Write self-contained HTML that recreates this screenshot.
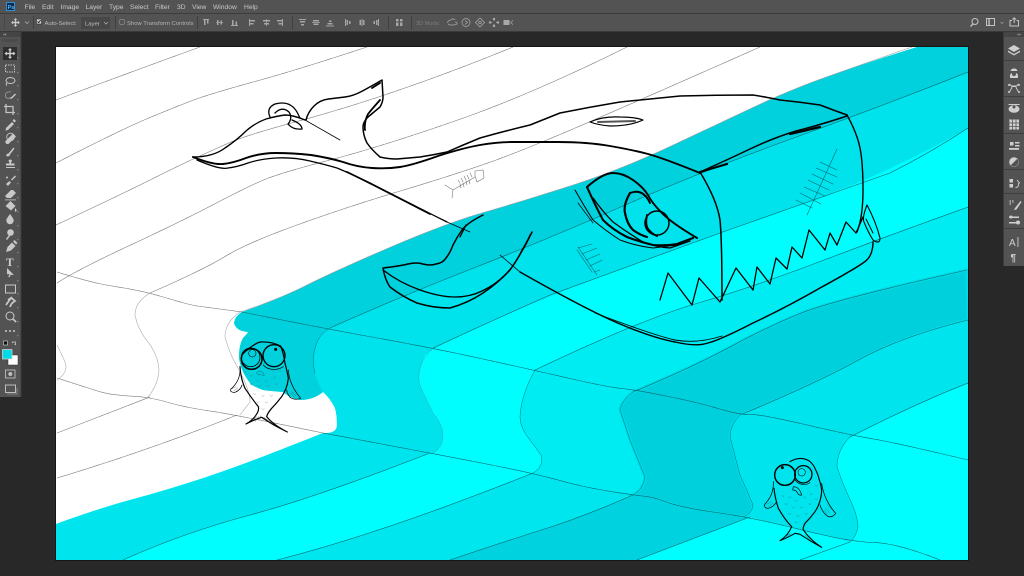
<!DOCTYPE html>
<html><head><meta charset="utf-8"><title>Photoshop</title>
<style>
html,body{margin:0;padding:0;width:1024px;height:576px;overflow:hidden;background:#282828}
svg.root{display:block;position:absolute;left:0;top:0;filter:blur(.3px)}
text{font-family:"Liberation Sans",sans-serif}
</style></head><body>
<svg class="root" width="1024" height="576" viewBox="0 0 1024 576" xmlns="http://www.w3.org/2000/svg">
<rect width="1024" height="576" fill="#282828"/>

<!-- top bars -->
<rect x="0" y="0" width="1024" height="13" fill="#535353"/>
<rect x="0" y="13" width="1024" height="1" fill="#3c3c3c"/>
<rect x="0" y="14" width="1024" height="17" fill="#535353"/>
<rect x="0" y="31" width="1024" height="1" fill="#3a3a3a"/>

<!-- PS logo -->
<rect x="6.5" y="2.5" width="8" height="8" fill="#0b2c4c" stroke="#2f8fd8" stroke-width="1"/>
<text x="7.6" y="9" font-size="5.5" font-weight="bold" fill="#5ab4f0">Ps</text>

<!-- menu -->
<g font-size="6.7" fill="#c9c9c9">
<text x="24.5" y="8.8">File</text><text x="42" y="8.8">Edit</text><text x="60.5" y="8.8">Image</text>
<text x="85.5" y="8.8">Layer</text><text x="109" y="8.8">Type</text><text x="130" y="8.8">Select</text>
<text x="155" y="8.8">Filter</text><text x="177" y="8.8">3D</text><text x="192" y="8.8">View</text>
<text x="213" y="8.8">Window</text><text x="244" y="8.8">Help</text>
</g>

<!-- options bar -->
<g stroke="#404040" stroke-width="1">
<path d="M33.5 16V29M115.5 16V29M197.5 16V29M292.5 16V29M388.5 16V29M411.5 16V29"/>
<path d="M4.5 16V29" stroke="#484848"/>
</g>
<g fill="#c8c8c8">
<path d="M15.5 18l1.8 2h-1.2v1.8h1.8v-1.2l2 1.9-2 1.9v-1.2h-1.8v1.8h1.2l-1.8 2-1.8-2h1.2v-1.8h-1.8v1.2l-2-1.9 2-1.9v1.2h1.8v-1.8h-1.2z"/>
</g>
<path d="M25 21.5l2 2 2-2" fill="none" stroke="#aaa" stroke-width=".8"/>
<rect x="36.500" y="19" width="5" height="5" fill="#d4d4d4" stroke="#333" stroke-width=".6"/>
<path d="M37.600 21.500l1 1.200 2-2.500" fill="none" stroke="#222" stroke-width=".9"/>
<text x="44.500" y="25" font-size="5.900" fill="#bdbdbd">Auto-Select:</text>
<rect x="81" y="17" width="29" height="12" fill="#474747"/>
<text x="85" y="25.500" font-size="5.900" fill="#c4c4c4">Layer</text>
<path d="M104 22l2 2 2-2" fill="none" stroke="#aaa" stroke-width=".8"/>
<rect x="119.500" y="19.500" width="5" height="5" rx="1.500" fill="none" stroke="#8a8a8a" stroke-width=".7"/>
<text x="127" y="25" font-size="5.900" fill="#b4b4b4">Show Transform Controls</text>
<g fill="#a6a6a6">
<path d="M203 19h6v1h-6zM204 20h1.500v5H204zM207 20h1.500v3.500H207z"/>
<path d="M216 22h7v.8h-7zM217 20h1.500v5H217zM220.500 20.500h1.500v4h-1.500z"/>
<path d="M231 25h7v1h-7zM232 20h1.500v5H232zM235.500 21.500h1.500v3.500h-1.500z"/>
<path d="M249 19h1v7h-1zM250 20h5v1.500h-5zM250 23h3.500v1.500H250z"/>
<path d="M266 19h.8v7H266zM263 20h7v1.500h-7zM264 23h5v1.500h-5z"/>
<path d="M282 19h1v7h-1zM277 20h5v1.500h-5zM278.500 23H282v1.500h-3.500z"/>
<path d="M299 19h7v1h-7zM300 21h5v1.500h-5zM301 24h3v1.500h-3z"/>
<path d="M312 22h8v.8h-8zM313 20h6v1.500h-6zM313.500 23.500h5V25h-5z"/>
<path d="M326 25.500h8v1h-8zM327.500 23h5v1.500h-5zM329 20.500h2.500V22H329z"/>
<path d="M345 19h1v7h-1zM346.500 20h1.500v5h-1.500zM349 21h1.500v3H349z"/>
<path d="M361.500 19h1v7h-1zM359.500 20h1.500v5h-1.500zM363 20h1.500v5H363z"/>
<path d="M378 19h1v7h-1zM376 20h1.500v5H376zM373.500 21h1.500v3h-1.500z"/>
<path d="M396 19h2.500v2.500H396zM400 19h2.500v2.500H400zM396 22.500h2.500V26H396zM400 22.500h2.500V26H400z"/>
</g>
<text x="416" y="25" font-size="5.600" fill="#7c7c7c">3D Mode:</text>
<g fill="none" stroke="#9a9a9a" stroke-width=".9">
<path d="M447.500 23c0-2 2-3 3.500-3 1-1.500 3-1.500 4 0M448 24c2 1.500 6 1.500 9 0 .5-1-.5-2-2-2"/>
<circle cx="466" cy="22.500" r="4"/><path d="M465 20.500l2.500 2-2.500 2"/>
<path d="M480 18l4.500 4.500L480 27l-4.500-4.500z"/><circle cx="480" cy="22.500" r="1.200"/>
<path d="M494 19v2M494 24v2M490 22.500h2M496 22.500h2"/>
</g>
<g fill="#a8a8a8">
<circle cx="494" cy="19" r="1.200"/><circle cx="494" cy="26" r="1.200"/><circle cx="490" cy="22.500" r="1.200"/><circle cx="498" cy="22.500" r="1.200"/>
<rect x="503.500" y="20" width="6" height="5"/>
<path d="M510 22.500l3-2.500v1l-2 1.500 2 1.500v1z"/>
</g>
<!-- right top icons -->
<g fill="none" stroke="#c4c4c4" stroke-width="1">
<circle cx="975" cy="21.500" r="3"/><path d="M973 24l-2.500 2.500" stroke-width="1.300"/>
<rect x="986.500" y="18.500" width="8" height="7"/><path d="M989 18.500v7" stroke-width="1.400"/>
<path d="M1000.500 22l1.500 1.500 1.500-1.500" stroke="#888"/>
<path d="M1012 20.500h-2v5.500h8.500v-5.500h-2M1014.200 23v-5M1012.500 19.500l1.700-1.700 1.700 1.700"/>
</g>

<!-- Left tool panel -->
<rect x="0" y="32" width="20.500" height="365" fill="#535353"/>
<rect x="20.500" y="32" width="1" height="365" fill="#3c3c3c"/>
<rect x="0" y="32" width="20.500" height="5" fill="#454545"/>
<path d="M3 34.500l1.500-1v2zM6.500 34.500l-1.500-1v2z" fill="#aaa"/>
<rect x="2" y="39" width="16" height="3" fill="#4b4b4b"/>
<rect x="3" y="47" width="14" height="13" fill="#2e2e2e"/>
<g fill="#d0d0d0">
<path d="M10 48l2 2.300h-1.300v2.500h2.500v-1.300l2.300 2-2.300 2v-1.300h-2.500v2.500H12l-2 2.300-2-2.300h1.300v-2.500H6.800v1.300l-2.300-2 2.300-2v1.300h2.500v-2.500H8z"/>
</g>
<g fill="none" stroke="#c4c4c4" stroke-width="1">
<rect x="5.500" y="65" width="9" height="7" stroke-dasharray="1.500 1"/>
<ellipse cx="10.500" cy="80.500" rx="4.500" ry="3"/><path d="M7 83c-1 1-1 2 0 2.500"/>
<path d="M11 92c-3-1-6 1-5.500 4s4 3 5 1" stroke="#8f8f8f"/>
<path d="M6 104v8.500h9M4 106.500h9V115" stroke-width="1.300"/>
</g>
<g fill="#c8c8c8">
<path d="M11 97.500l4-4 1 1-4 4-2 .8z"/>
<path d="M6 128l6-6 2 2-6 6-2.500.6zM12.500 120.500l1.500-1.500 2 2-1.500 1.500z"/>
<path d="M6 140.500l7-7 3 3-7 7a2 2 0 0 1-3-3z"/><circle cx="10.500" cy="137" r="3.800" fill="none" stroke="#c8c8c8" stroke-width=".8"/>
<path d="M6 156c.5-2 1.500-2.500 2.500-2.500l5-6 1 1-4.500 6c0 1.500-1.500 2.500-4 1.500z"/>
<path d="M8.500 160.500a2 2 0 0 1 3.500 0c0 1-1 1.500-1 3h3.500v2H6v-2h3.500c0-1.500-1-2-1-3zM6 167h9v1H6z"/>
<path d="M6 184l3.500-3 1.500 1.500-3 3.500zM11 179.500l4-4 1 1-4 4z"/><circle cx="7" cy="177.500" r="1"/>
<path d="M5 196l6-6h2l3 3-5 5H7z"/><path d="M5 199.500h11v.8H5z"/>
<path d="M5.500 206l5-5 5 5-4.500 4.500zM15.500 208c1 1.500 1.500 2.500.5 3.500s-1.700-1-.5-3.500z"/>
<path d="M10 214c2.500 3.500 3.700 5 3.700 6.500a3.700 3.700 0 0 1-7.400 0c0-1.500 1.200-3 3.700-6.500z"/>
<circle cx="10.500" cy="232.500" r="3.300"/><path d="M9 235l-3 4 1 1 3-4z"/>
<path d="M6 252l1.500-5 4.500-4.500 3.500 3.500-4.500 4.500zM13 241.500l1.500-1.500 3 3-1.500 1.500z"/>
<path d="M7 273l7 7-3.200-.2-1.500 2.700-1-1 1.300-2.500-2.600.2z" transform="translate(0,-5)"/>
</g>
<text x="6" y="266" font-size="11.500" font-weight="bold" fill="#d0d0d0" style="font-family:'Liberation Serif',serif">T</text>
<g fill="none" stroke="#c8c8c8" stroke-width="1">
<rect x="5.500" y="285" width="10" height="8"/>
<path d="M6 305c2-3 4-6 6-8M8 300l3-2c2 1 3 2 4 3-2 1-4 3-5 6" stroke-width="1.800"/>
<circle cx="10" cy="316" r="4"/><path d="M13 319l3 3" stroke-width="1.600"/>
</g>
<g fill="#c8c8c8">
<circle cx="6" cy="331" r="1"/><circle cx="10" cy="331" r="1"/><circle cx="14" cy="331" r="1"/>
<rect x="3.500" y="341" width="4" height="4" fill="#111" stroke="#ddd" stroke-width=".6"/>
<path d="M12 342h3.500v3M15.500 345l-1-1M12 342l1 1" stroke="#c8c8c8" stroke-width=".8" fill="none"/>
</g>
<rect x="8" y="355" width="10" height="10" fill="#ffffff" stroke="#333" stroke-width=".5"/>
<rect x="2.500" y="349.500" width="9.500" height="9.500" fill="#00dbe6" stroke="#dcdcdc" stroke-width=".7"/>
<rect x="5.500" y="370" width="9.500" height="8" fill="none" stroke="#bdbdbd" stroke-width=".9"/>
<circle cx="10.300" cy="374" r="2" fill="#bdbdbd"/>
<rect x="5.500" y="385" width="10" height="7.500" fill="none" stroke="#bdbdbd" stroke-width="1"/>
<path d="M7 394h10v-6" fill="none" stroke="#8f8f8f" stroke-width=".8"/>
<g fill="#9e9e9e" opacity=".7">
<path d="M17 57h1.300v1.300H17zM17 72h1.300v1.300H17zM17 85h1.300v1.300H17zM17 99h1.300v1.300H17zM17 113h1.300v1.300H17zM17 127h1.300v1.300H17zM17 141h1.300v1.300H17zM17 155h1.300v1.300H17zM17 169h1.300v1.300H17zM17 183h1.300v1.300H17zM17 197h1.300v1.300H17zM17 211h1.300v1.300H17zM17 225h1.300v1.300H17zM17 239h1.300v1.300H17zM17 252h1.300v1.300H17zM17 266h1.300v1.300H17zM17 280h1.300v1.300H17zM17 293h1.300v1.300H17zM17 307h1.300v1.300H17zM17 321h1.300v1.300H17zM17 335h1.300v1.300H17z"/>
</g>

<!-- Right panel -->
<rect x="1003.500" y="32" width="20.500" height="234" fill="#535353"/>
<rect x="1003" y="32" width="1" height="234" fill="#3c3c3c"/>
<rect x="1004" y="32" width="20" height="5" fill="#454545"/>
<path d="M1017 34.500l1.500-1v2zM1021 34.500l-1.500-1v2z" fill="#aaa"/>
<g fill="#3e3e3e">
<rect x="1004" y="60" width="20" height="1"/><rect x="1004" y="96" width="20" height="1"/><rect x="1004" y="133" width="20" height="1"/><rect x="1004" y="169" width="20" height="1"/><rect x="1004" y="193" width="20" height="1"/><rect x="1004" y="228" width="20" height="1"/>
</g>
<g fill="#cfcfcf">
<path d="M1014 45l6 3.500-6 3.500-6-3.500zM1008 50.500l6 3.500 6-3.500v1.500l-6 3.500-6-3.500z"/>
<path d="M1010 75a4.500 4.500 0 0 1 8 0v3h-8zM1014 68.500a3.500 3.500 0 0 1 3.500 2.500h-7a3.500 3.500 0 0 1 3.500-2.500z"/><circle cx="1014" cy="74" r="2" fill="#535353"/>
<ellipse cx="1014" cy="109" rx="5.500" ry="3.800"/><circle cx="1014" cy="107" r="1.500" fill="#535353"/>
<path d="M1008.500 104h11v1h-11z"/>
<rect x="1009" y="119.500" width="10" height="10"/>
<circle cx="1014" cy="162" r="4.800"/>
<rect x="1010" y="142" width="3.500" height="3.500"/><rect x="1015" y="142" width="4.500" height="1.500"/><rect x="1015" y="145" width="4.500" height="1.500"/><rect x="1009" y="148" width="10" height="1.800"/>
<rect x="1009.500" y="179" width="3.500" height="3.500"/><rect x="1009.500" y="184" width="3.500" height="3.500"/>
<path d="M1015 208l5.500-7 1 1-5 7.500-2.500.5z"/>
<rect x="1009" y="216.500" width="10" height="1.500"/><rect x="1009" y="222" width="10" height="1.500"/><circle cx="1018" cy="222.500" r="2"/><circle cx="1011" cy="217" r="1.500"/>
</g>
<g fill="none" stroke="#cfcfcf" stroke-width=".9">
<path d="M1009.500 84l2 2h5l2-2M1009.500 92c1-2 2-3 2.500-5M1018.500 92c-1-2-2-3-2.500-5M1012 86.500l4 0"/>
<path d="M1017 180l2.500 3-1 .5c.5 2-.5 4-3 4"/>
<path d="M1009 120v9M1012.500 119.500v10M1016 119.500v10M1009 123h10M1009 126.500h10" stroke="#535353" stroke-width=".8"/>
</g>
<path d="M1014 157.500a4.500 4.500 0 0 1 0 9z" fill="#535353" transform="rotate(45 1014 162)"/>
<circle cx="1009" cy="85" r="1" fill="#cfcfcf"/><circle cx="1019" cy="85" r="1" fill="#cfcfcf"/>
<circle cx="1009" cy="92" r="1" fill="#cfcfcf"/><circle cx="1019" cy="92" r="1" fill="#cfcfcf"/>
<path d="M1009.500 200h1.500v5h-1.500zM1012 200h1.500v3H1012z" fill="#9a9a9a"/>
<text x="1009" y="246" font-size="10" fill="#cfcfcf">A</text><rect x="1017.500" y="237" width=".9" height="10" fill="#cfcfcf"/>
<text x="1010.500" y="261" font-size="10" fill="#cfcfcf" font-weight="bold">¶</text>

<!-- CANVAS -->
<rect x="55" y="46" width="914" height="515" fill="#151515"/>
<rect x="56" y="47" width="912" height="513" fill="#ffffff"/>
<svg x="56" y="47" width="912" height="513" viewBox="56 47 912 513">

<!-- base fill -->
<path fill="#00feff" d="M917,47L968,47L968,560L56,560L56,524Q100,508 133.500,499Q167,490 202,478.500Q237,467 280,450Q323,433 328,433Q337,432 337,425Q337,415 335,408Q330,398 323,392Q313,400 300,400Q290,398 283,392Q270,391 263,390Q252,386 250,383Q240,370 239,357Q239,345 243,338Q248,333 248,332Q236,331 234,323Q235,316 242,312Q277,300 307,285Q337,270 392,246.500Q447,223 483.500,212.500Q520,202 570,186Q620,170 670,146.500Q720,123 755,106.500Q790,90 825,77.500Q860,65 917,47Z"/>
<!-- top dark -->
<path fill="#00d1dd" d="M917,47L968,47L968,72Q890,103 795,137.500Q700,172 626.500,204.500Q553,237 475,267.500Q397,298 330,328Q320,333 316,345Q311,360 315,373Q319,385 323,392Q313,400 300,400Q290,398 283,392Q270,391 263,390Q252,386 250,383Q240,370 239,357Q239,345 243,338Q248,333 248,332Q236,331 234,323Q235,316 242,312Q277,300 307,285Q337,270 392,246.500Q447,223 483.500,212.500Q520,202 570,186Q620,170 670,146.500Q720,123 755,106.500Q790,90 825,77.500Q860,65 917,47Z"/>
<!-- mid band 1 + block -->
<path fill="#00e3ed" d="M330,328Q397,298 475,267.500Q553,237 626.500,204.500Q700,172 795,137.500Q890,103 968,72L968,128Q890,173 805,203Q720,233 635,264Q550,295 491.500,321.500Q433,348 425,355Q416,377 421,388Q428,403 433,413Q443,425 443,435Q443,448 433,453L323,433L328,433Q337,432 337,425Q337,415 335,408Q330,398 323,392Q319,385 315,373Q311,360 316,345Q320,333 330,328Z"/>
<path fill="#00e4ee" d="M323,433L280,450Q237,467 202,478.500Q167,490 133.500,499Q100,508 56,524L56,560L123,560Q183,533 250,515Q317,497 430,453Z"/>
<!-- middle light block -->
<path fill="#00ecf3" d="M535,370Q640,320 696.500,303.500Q753,287 821.500,261Q890,235 968,207L968,270Q833,300 800,313.500Q767,327 730,347Q693,367 633,392Q622,400 620,410Q625,425 630,440Q638,460 645,477Q643,490 633,495L583,487L533,473Q544,467 541,455Q535,447 530,440Q520,428 520,417Q521,395 535,370Z"/>
<path fill="#00e6ef" d="M533,473Q383,533 277,560L450,560Q500,543 541.500,530Q583,517 633,495L583,487Z"/>
<!-- dark band 2 -->
<path fill="#00d0dc" stroke="#00dae5" stroke-width="3" d="M633,392Q693,367 730,347Q767,327 800,313.500Q833,300 967,270L968,320Q900,337 858.500,360Q817,383 740,415Q730,425 730,437Q735,456 740,475Q747,490 753,505Q752,514 743,517L683,508Q653,497 633,495Q643,490 645,477Q638,460 630,440Q625,425 620,410Q622,400 633,392Z"/>
<path fill="#00d3df" d="M633,495Q583,517 541.500,530Q500,543 450,560L637,560L750,517L683,508Q653,497 633,495Z"/>
<!-- mid block 3 -->
<path fill="#00e4ee" d="M740,415Q817,383 858.500,360Q900,337 968,320L968,383Q917,403 850,437Q837,450 837,467Q842,482 848,495Q858,515 858,527Q856,537 850,542L750,517L743,517Q752,514 753,505Q747,490 740,475Q735,456 730,437Q730,425 740,415Z"/>

<!-- sketch lines on white -->
<g fill="none" stroke="#7a7a7a" stroke-width=".6" stroke-dasharray="7 .6" stroke-linejoin="round" stroke-linecap="round">
<path d="M56,100Q120,76 200,47"/>
<path d="M56,163Q120,130 150,117.500Q180,105 196.500,99Q213,93 255,81.500Q297,70 367,47"/>
<path d="M56,225Q120,195 150,180Q180,165 196.500,157.500Q213,150 230,142.500Q247,135 297,121.500Q347,108 402,89Q457,70 513,47"/>
<path d="M57,283Q77,270 128.500,246Q180,222 213.500,204.500Q247,187 263.500,180Q280,173 330,160Q380,147 455,121Q530,95 627,47"/>
<path d="M150,293Q203,270 225,256.500Q247,243 297,225Q347,207 397,192Q447,177 483.500,164.500Q520,152 591.500,121Q663,90 760,47"/>
<path stroke="#a0a0a0" d="M240,312Q277,300 307,285Q337,270 392,246.500Q447,223 483.500,212.500Q520,202 570,186Q620,170 670,146.500Q720,123 755,106.500Q790,90 825,77.500Q860,65 912,47"/>
<path d="M57,272Q93,283 109,285.500Q125,288 137.500,290.500Q150,293 170,299Q190,305 197.500,306Q205,307 242,312"/>
<path d="M57,378Q85,387 97.500,391Q110,395 130,396Q150,397 166.500,402Q183,407 210,411Q237,415 323,433"/>
<path d="M57,433L150,397"/>
<path d="M57,478Q150,450 237,415"/>
<path stroke="#aaa" d="M150,293Q135,302 135,315Q138,330 148,342Q158,355 159,370Q158,385 148,397"/>
<path stroke="#aaa" d="M57,345Q62,355 65,362Q69,372 57,380"/>
<path stroke="#aaa" d="M240,312Q225,322 225,337Q230,355 238,368Q250,390 250,402L240,415"/>
</g>

<!-- teal lines on cyan -->
<g fill="none" stroke="#05666f" stroke-width=".6" stroke-linejoin="round" stroke-linecap="round">
<path stroke-dasharray="7 .6" d="M242,312Q327,329 380,338.500Q433,348 483,359Q533,370 570,378.500Q607,387 622,388.500Q637,390 668.500,396.500Q700,403 720,409Q740,415 750,414.500Q760,414 805,424.500Q850,435 873.500,439Q897,443 968,460"/>
<path stroke-dasharray="7 .6" d="M323,433Q430,453 481.500,463Q533,473 558,480Q583,487 608,491Q633,495 643,496Q653,497 668,502.500Q683,508 716.500,512.500Q750,517 800,529.500Q850,542 873.500,542.500Q897,543 940,560"/>
<path d="M330,328Q397,298 475,267.500Q553,237 626.500,204.500Q700,172 795,137.500Q890,103 968,72"/>
<path d="M433,348Q491,321 550,295Q635,264 720,233Q805,203 890,173Q930,153 968,128"/>
<path d="M535,370Q640,320 696.500,303.500Q753,287 821.500,261Q890,235 968,207"/>
<path d="M633,392Q693,367 730,347Q767,327 800,313.500Q833,300 967,270"/>
<path d="M740,415Q817,383 858.500,360Q900,337 968,320"/>
<path d="M850,437Q917,403 968,383"/>
<path d="M430,453Q317,497 250,515Q183,533 123,560"/>
<path d="M533,473Q383,533 277,560"/>
<path d="M633,495Q583,517 541.500,530Q500,543 450,560"/>
<path d="M750,517L637,560"/>
<path d="M850,542L800,560"/>
<path stroke-width=".45" d="M330,328Q320,333 316,345Q311,360 315,373"/>
<path stroke="#35a5ad" stroke-width=".45" d="M433,348Q425,355 421,365Q416,377 421,388Q428,403 433,413Q443,425 443,435Q443,448 433,453"/>
<path stroke-width=".45" d="M535,370Q521,395 520,417Q520,428 530,440Q535,447 541,455Q544,467 533,473"/>
<path stroke-width=".45" d="M633,392Q622,400 620,410Q625,425 630,440Q638,460 645,477Q643,490 633,495"/>
<path stroke-width=".45" d="M740,415Q730,425 730,437Q735,456 740,475Q747,490 753,505Q752,514 743,517"/>
<path stroke-width=".45" d="M850,437Q837,450 837,467Q842,482 848,495Q858,515 858,527Q856,537 850,542"/>
<!-- scars -->
<path d="M837,149L807,215M820,162L837,170M816,168L837,177M812,174L833,184M808,180L829,190M804,187L825,196M800,193L821,204M796,200L812,208"/>
<path d="M578,247L597,275M578,248L592,244M582,254L597,248M586,260L600,254M590,266L602,260M594,272L600,270M577,250L592,272"/>
</g>

<!-- whale -->
<g fill="none" stroke="#000" stroke-width="1.500" stroke-linejoin="round" stroke-linecap="round">
<path stroke-width="1.400" d="M193,157Q213,157 225,148Q237,140 246,131Q255,123 266,119Q277,116 285,115Q293,115 305,120"/>
<path stroke-width=".8" d="M305,120L340,140"/>
<path d="M306,120Q308,112 314,106Q320,100 328.500,99Q337,98 345,97Q353,96 361.500,91.500Q370,87 382,80L383,97Q383,102 380,107Q374,112 368,117Q363,122 363,127Q363,135 367,143Q372,150 380,157Q388,159 397,159Q408,158 420,157Q433,155 447,152Q463,145 480,138Q505,131 530,125Q545,119 560,113Q590,107 620,102Q650,99 680,96Q716,95 753,95Q766,97 780,100Q800,102 820,105Q833,110 847,115"/>
<path stroke-width="1.800" d="M372,88L380,83M380,100Q372,109 368,114Q364,122 365,130"/>
<path stroke-width="1.900" d="M193,157Q213,165 223,164Q233,163 246,158Q260,153 276,153Q293,153 311,155Q330,158 343,162Q357,167 372,168Q387,169 400,167Q413,165 438,156Q463,148 480,145Q497,142 513,142Q530,142 558,142Q587,142 610,146Q633,150 648,154Q663,158 700,173"/>
<path stroke-width="1.300" d="M197,160Q220,170 228,168Q237,167 248,163Q260,159 276,158Q293,157 310,161Q327,165 337,168Q347,172 370,183Q393,195 447,222"/>
<path stroke-width="1.800" d="M347,172Q370,183 430,214"/>
<path stroke-width=".7" d="M447,222L470,232"/>
<path stroke-width="1.400" d="M520,272Q587,310 620,324Q653,338 675,342Q697,347 708,343Q720,340 753,323Q787,307 820,288Q853,270 863,263Q873,257 873,242"/>
<path stroke-width=".9" d="M595,313Q653,335 675,340Q697,344 722,336"/>
<path stroke-width=".8" d="M500,255L520,272"/>
<!-- nose -->
<path stroke-width="1.200" d="M590,122Q603,116 620,117Q635,117 643,120Q630,126 610,126Q598,125 590,122Z"/>
<path stroke-width="2" stroke="#555" d="M598,122L635,121"/>
<!-- ring -->
<path stroke-width="1.300" d="M270,117Q266,108 275,104Q290,100 297,112L300,118"/>
<path stroke-width="1.300" d="M275,113Q282,106 289,112Q293,118 288,124Q293,130 302,129Q302,124 292,120"/>
<!-- flipper -->
<path d="M483,215Q467,223 462,230Q457,237 453,245Q450,253 446,258Q443,263 436,264Q430,266 423,264Q417,262 408,264Q400,266 383,268Q385,280 390,287Q403,297 417,303Q433,308 450,308Q468,303 483,293Q498,283 510,270Q522,253 532,232"/>
<path stroke-width="1.300" d="M466,225L460,237M383,270Q400,283 420,290Q440,297 455,297Q470,297 482,291Q495,285 505,275Q515,265 521,252Q528,240 530,235"/>
<!-- head edges -->
<path d="M700,172Q727,160 750,149Q773,138 796,131Q820,125 847,116"/>
<path stroke-width="2.200" d="M700,172L727,164M790,134L820,127"/>
<path d="M700,172Q717,200 720,220Q722,240 722,300"/>
<path stroke-width="1.400" d="M847,115Q857,133 860,148Q863,163 863,190Q863,217 857,232"/>
<!-- teeth -->
<path stroke-width="1.300" d="M660,300L668,273L692,305L699,278L720,302L736,268L753,290L757,267L770,284L776,258L787,269L792,247L802,258L809,230L825,250L830,233L837,245L846,222L856,233L863,217"/>
<!-- ear -->
<path stroke-width="1.100" d="M867,205Q862,218 864,222Q868,232 873,240Q880,245 880,238Q876,222 867,205Z"/><path stroke-width="1" d="M866,219L873,233"/>
<!-- eye -->
<path stroke-width="1.900" d="M587,187Q603,173 613,173Q623,173 633,180Q643,187 648,195Q652,203 661,212Q670,222 697,238"/>
<path stroke-width="2.100" d="M587,187Q595,205 603,220Q613,230 627,237Q640,242 653,245Q665,246 677,244L693,238"/>
<path stroke-width="1.300" d="M593,198Q603,212 613,222Q628,233 643,242Q656,247 670,248L690,241"/>
<path stroke-width="1" d="M575,190Q584,206 593,220Q606,231 620,240Q636,246 653,248L677,245"/>
<path stroke-width=".7" d="M578,203L593,223"/>
<path stroke-width="2.200" d="M630,193Q623,205 625,213Q627,224 633,230Q640,235 647,237"/>
<path stroke-width="2" d="M630,193Q643,188 650,203"/>
<circle cx="657" cy="223" r="12"/>
<path stroke-width="1.900" d="M647,215Q645,224 648,229Q652,234 657,236"/>
</g>

<!-- fish skeleton -->
<g fill="none" stroke="#777" stroke-width=".6" stroke-linecap="round">
<path d="M445,185L453,190L452,198M453,190L475,177"/>
<path d="M475,171L483,170L484,178L477,182L475,176ZM460,183l-2-3M463,182l-2-4M466,180l-2-4M469,179l-2-4M472,177l-2-4M460,184l1 4M463,183l1 4M466,181l1 4M469,180l1 4"/>
</g>

<!-- Fish 1 -->
<g transform="translate(210,310) scale(.3333)" fill="none" stroke="#000" stroke-width="2.800" stroke-linejoin="round" stroke-linecap="round">
<path stroke-width="3.600" d="M98,132Q125,105 150,96Q185,94 212,108Q222,135 225,160Q232,185 235,205Q232,235 215,260Q200,280 185,295Q172,310 170,320Q190,345 232,366Q195,348 175,335Q165,328 155,322Q130,330 108,342Q130,330 140,312Q148,300 145,290Q125,265 105,235Q92,205 90,170"/>
<path stroke-width="2.200" d="M90,185Q88,215 62,238Q60,248 75,247Q92,240 96,225M235,180Q238,225 272,265Q255,272 240,262Q232,252 230,240"/>
<path d="M66,236l12-6M72,242l12-8M244,245l14,12M240,248l12,12" stroke-width="1" stroke="#333"/>
<path d="M140,320l-14,14M146,320l-10,14M152,318l-6,10M162,322l10,10M168,326l10,10M175,332l10,8" stroke-width="1.200" stroke="#333"/>
<circle cx="125" cy="147" r="31" stroke-width="4.600"/><circle cx="122" cy="142" r="28" stroke-width="2.400"/>
<circle cx="192" cy="137" r="33" stroke-width="4"/>
<path d="M160,165c12,15 40,18 60,5" stroke-width="2"/>
<circle cx="127" cy="130" r="11" stroke-width="1.600"/>
<circle cx="197" cy="118" r="4.500" fill="#000" stroke="none"/>
<path d="M140,188c6-6 14-6 20,0l3,8-6,0c-3-4-9-5-11,-1z" stroke-width="1.500" stroke="#05666f"/>
<path stroke="#2a8c95" stroke-width="1.200" d="M120,195l4,5 4-5M140,210l4,5 4-5M165,212l4,5 4-5M190,200l4,5 4-5M205,178l4,5 4-5M120,220l4,5 4-5M145,225l4,5 4-5M170,225l4,5 4-5M195,220l4,5 4-5M100,185l4,5 4-5M185,180l4,5 4-5"/>
<path stroke="#888" stroke-width="1" d="M130,250l4,5 4-5M155,255l4,5 4-5M180,255l4,5 4-5M140,275l4,5 4-5M165,275l4,5 4-5M155,295l4,5 4-5"/>
</g>

<!-- Fish 2 -->
<g transform="translate(750,445) scale(.3333)" fill="none" stroke="#000" stroke-width="2.800" stroke-linejoin="round" stroke-linecap="round">
<path stroke-width="3.400" d="M120,50Q150,32 178,48Q190,58 195,70Q205,90 208,105Q215,125 215,140Q212,175 195,200Q180,220 165,235Q158,248 160,255Q180,285 215,307Q180,288 150,268L135,265Q115,277 90,287Q115,270 125,245Q105,225 85,190Q75,160 72,130"/>
<path stroke-width="2.200" d="M70,110Q72,150 44,178Q42,190 55,190Q72,185 80,170M215,115Q222,165 257,205Q248,218 235,215Q218,205 210,180"/>
<path d="M50,178l14-8M56,184l14-10M232,180l14,14M226,188l14,16M222,195l10,12" stroke-width="1" stroke="#0a5a62"/>
<path d="M100,278l20-12M108,276l16-10M165,270l14,14M172,268l14,14M160,272l14,12" stroke-width="1" stroke="#0a5a62"/>
<circle cx="105" cy="90" r="31" stroke-width="4.400"/>
<circle cx="160" cy="88" r="26" stroke-width="3.800"/><path d="M135,105c8,12 28,20 45,8" stroke-width="2"/>
<circle cx="155" cy="82" r="11" stroke-width="1.600"/>
<circle cx="97" cy="68" r="4.500" fill="#000" stroke="none"/>
<path stroke-width="2" d="M130,125Q148,125 155,150Q145,152 142,143Q138,135 128,135Z"/>
<path stroke="#127881" stroke-width="1.100" d="M95,150l4,5 4-5M115,155l4,5 4-5M135,165l4,5 4-5M160,155l4,5 4-5M180,145l4,5 4-5M195,120l4,5 4-5M105,175l4,5 4-5M125,185l4,5 4-5M150,185l4,5 4-5M175,175l4,5 4-5M195,160l4,5 4-5M115,205l4,5 4-5M140,210l4,5 4-5M165,205l4,5 4-5M135,230l4,5 4-5"/>
</g>
</svg>
</svg>
</body></html>
